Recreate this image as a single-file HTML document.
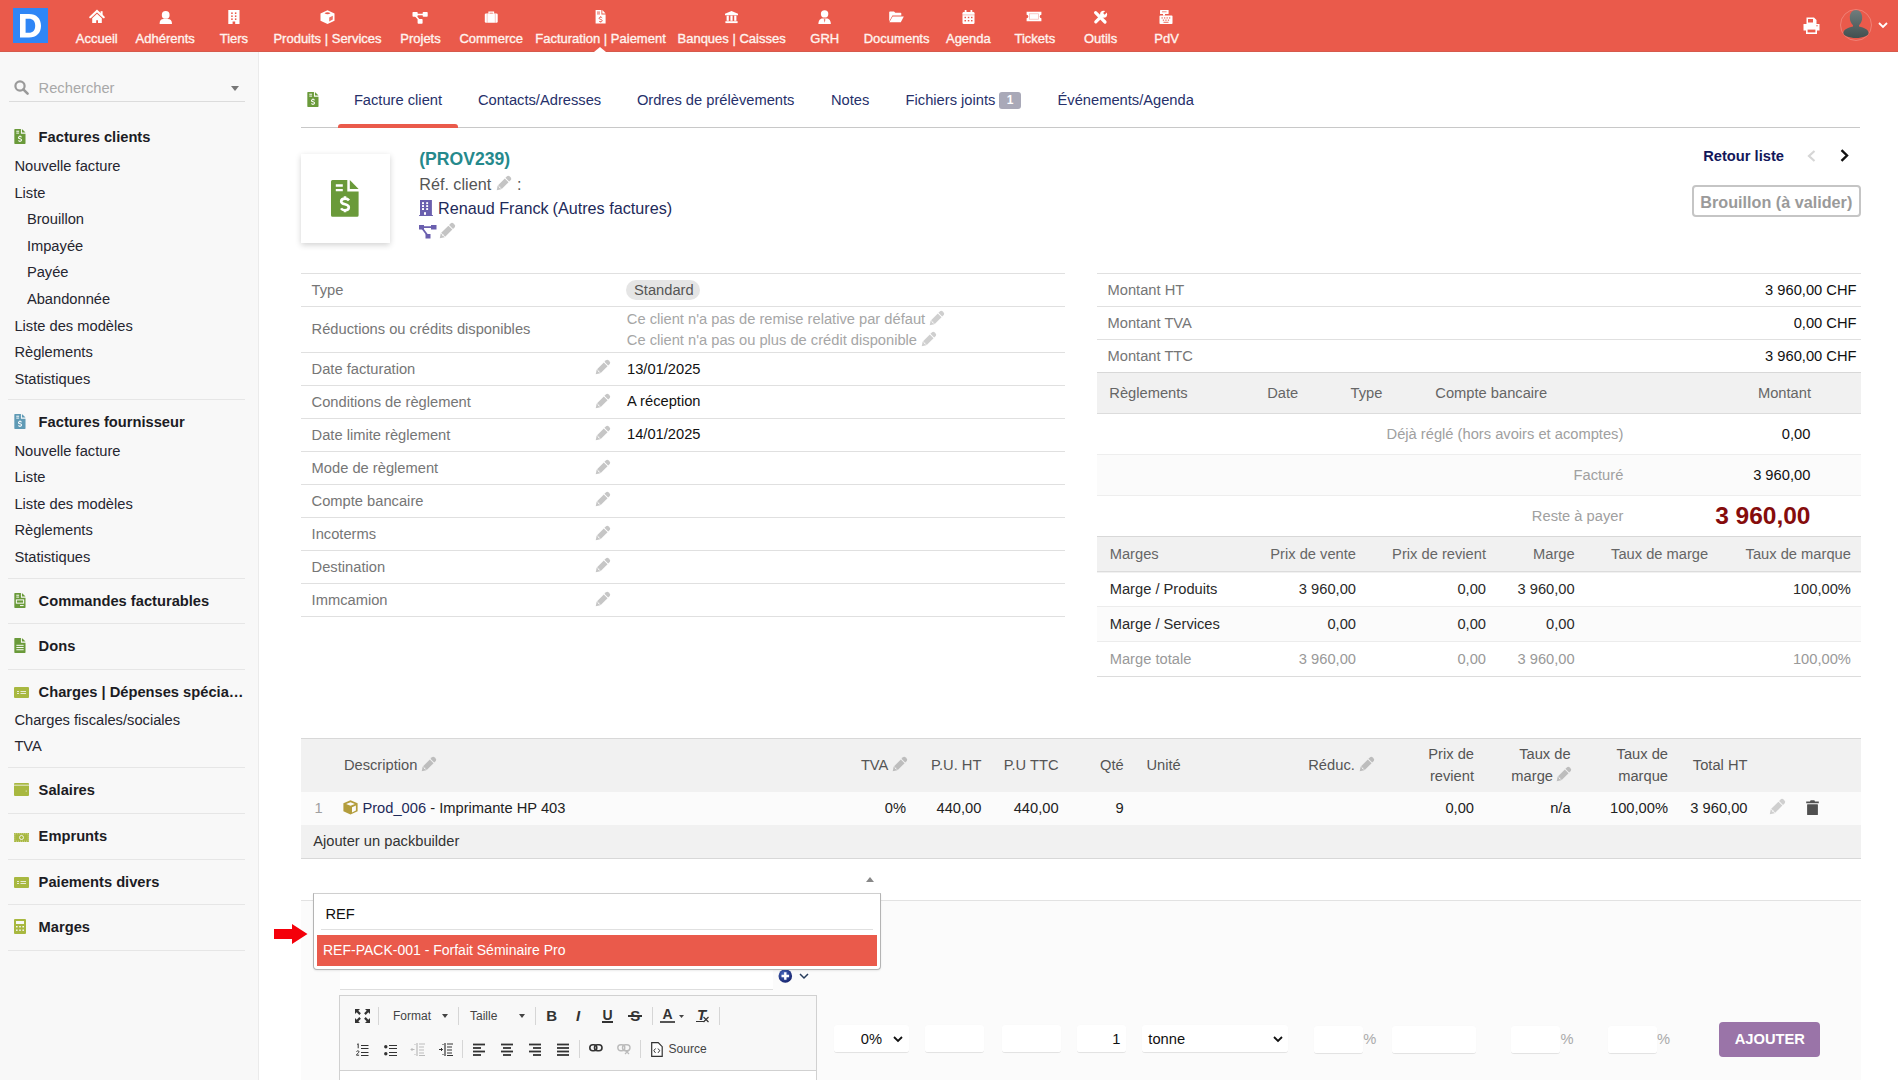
<!DOCTYPE html>
<html><head><meta charset="utf-8"><title>Dolibarr</title>
<style>
html,body{margin:0;padding:0;width:1898px;height:1080px;overflow:hidden;background:#fff;font-family:"Liberation Sans", sans-serif;}
.t{position:absolute;white-space:nowrap;font-family:"Liberation Sans", sans-serif;}
.r{position:absolute;}
svg.r{overflow:visible;}
</style></head><body>
<div class="r" style="left:0px;top:0px;width:1898px;height:52px;background:#ea5a4b;"></div><div class="r" style="left:0px;top:51px;width:1898px;height:1px;background:#d65a4c;"></div><div class="r" style="left:13px;top:8px;width:35px;height:35px;background:#2f86f6;"></div><svg class="r" style="left:20px;top:14px;" width="22" height="24" viewBox="0 0 22 24"><path d="M0 0h9c7.5 0 12 4.5 12 11.8S16.5 23.5 9 23.5H0z M5.6 4.8v13.9h3.2c4.2 0 6.4-2.5 6.4-7S13 4.8 8.8 4.8z" fill="#fff" fill-rule="evenodd"/></svg><div class="t" style="top:30.90px;font-size:13px;line-height:16px;font-weight:400;color:#fff3ee;left:-203.2px;width:600px;text-align:center;-webkit-text-stroke:0.35px #fff3ee;">Accueil</div><div class="t" style="top:30.90px;font-size:13px;line-height:16px;font-weight:400;color:#fff3ee;left:-134.8px;width:600px;text-align:center;-webkit-text-stroke:0.35px #fff3ee;">Adhérents</div><div class="t" style="top:30.90px;font-size:13px;line-height:16px;font-weight:400;color:#fff3ee;left:-66.1px;width:600px;text-align:center;-webkit-text-stroke:0.35px #fff3ee;">Tiers</div><div class="t" style="top:30.90px;font-size:13px;line-height:16px;font-weight:400;color:#fff3ee;left:27.5px;width:600px;text-align:center;-webkit-text-stroke:0.35px #fff3ee;">Produits | Services</div><div class="t" style="top:30.90px;font-size:13px;line-height:16px;font-weight:400;color:#fff3ee;left:120.5px;width:600px;text-align:center;-webkit-text-stroke:0.35px #fff3ee;">Projets</div><div class="t" style="top:30.90px;font-size:13px;line-height:16px;font-weight:400;color:#fff3ee;left:191.2px;width:600px;text-align:center;-webkit-text-stroke:0.35px #fff3ee;">Commerce</div><div class="t" style="top:30.90px;font-size:13px;line-height:16px;font-weight:400;color:#fff3ee;left:300.5px;width:600px;text-align:center;-webkit-text-stroke:0.35px #fff3ee;">Facturation | Paiement</div><div class="t" style="top:30.90px;font-size:13px;line-height:16px;font-weight:400;color:#fff3ee;left:431.6px;width:600px;text-align:center;-webkit-text-stroke:0.35px #fff3ee;">Banques | Caisses</div><div class="t" style="top:30.90px;font-size:13px;line-height:16px;font-weight:400;color:#fff3ee;left:524.8px;width:600px;text-align:center;-webkit-text-stroke:0.35px #fff3ee;">GRH</div><div class="t" style="top:30.90px;font-size:13px;line-height:16px;font-weight:400;color:#fff3ee;left:596.6px;width:600px;text-align:center;-webkit-text-stroke:0.35px #fff3ee;">Documents</div><div class="t" style="top:30.90px;font-size:13px;line-height:16px;font-weight:400;color:#fff3ee;left:668.4px;width:600px;text-align:center;-webkit-text-stroke:0.35px #fff3ee;">Agenda</div><div class="t" style="top:30.90px;font-size:13px;line-height:16px;font-weight:400;color:#fff3ee;left:734.8px;width:600px;text-align:center;-webkit-text-stroke:0.35px #fff3ee;">Tickets</div><div class="t" style="top:30.90px;font-size:13px;line-height:16px;font-weight:400;color:#fff3ee;left:800.5999999999999px;width:600px;text-align:center;-webkit-text-stroke:0.35px #fff3ee;">Outils</div><div class="t" style="top:30.90px;font-size:13px;line-height:16px;font-weight:400;color:#fff3ee;left:866.5999999999999px;width:600px;text-align:center;-webkit-text-stroke:0.35px #fff3ee;">PdV</div><svg class="r" style="left:88px;top:9px;" width="18" height="16" viewBox="0 0 18 16"><path d="M2.3 8.2L9 2l6.7 6.2" stroke="#fff" stroke-width="2.2" stroke-linecap="round" fill="none"/><rect x="12.6" y="2.2" width="2" height="4.2" fill="#fff"/><path d="M4.2 9.2L9 4.8l4.8 4.4V14.1H10V11.2H8.2V14.1H4.2z" fill="#fff"/></svg><svg class="r" style="left:159px;top:10px;" width="14" height="15" viewBox="0 0 14 15"><circle cx="6.7" cy="4.9" r="3.9" fill="#fff"/><path d="M0.6 14c0-3.2 1.2-5 4-5h4.2c2.8 0 4.2 1.8 4.2 5z" fill="#fff"/></svg><svg class="r" style="left:228px;top:10px;" width="12" height="14" viewBox="0 0 12 14"><path d="M0.3 0h11.2v14H7.2v-2.6H4.6V14H0.3z" fill="#fff"/><g fill="#ea5a4b"><rect x="3.2" y="2.4" width="1.5" height="1.6"/><rect x="6.9" y="2.4" width="1.5" height="1.6"/><rect x="3.2" y="5.4" width="1.5" height="1.6"/><rect x="6.9" y="5.4" width="1.5" height="1.6"/><rect x="3.2" y="8.4" width="1.5" height="1.6"/><rect x="6.9" y="8.4" width="1.5" height="1.6"/></g></svg><svg class="r" style="left:320px;top:10px;" width="15" height="14" viewBox="0 0 15 14"><path d="M7.5 0.3L14.5 3.4v7.4L7.5 13.9 0.5 10.8V3.4z" fill="#fff"/><path d="M4.5 3.3c1-.8 2-1.1 3-1.1s2 .3 3 1.1c-1 .6-2 .9-3 .9s-2-.3-3-.9z" fill="#ea5a4b"/><path d="M9.2 7.6l3.6-1.8v3.6l-3.6 2z" fill="#ea5a4b" opacity=".85"/></svg><svg class="r" style="left:412px;top:11px;" width="16" height="13" viewBox="0 0 16 13"><rect x="0.5" y="1" width="5.2" height="4.8" rx=".8" fill="#fff"/><rect x="10.7" y="1" width="5" height="4.8" rx=".8" fill="#fff"/><rect x="5.6" y="8" width="5" height="4.8" rx=".8" fill="#fff"/><path d="M4 3.4h7.5M3.2 4.5l4.5 5" stroke="#fff" stroke-width="1.5"/></svg><svg class="r" style="left:484px;top:11px;" width="14" height="12" viewBox="0 0 14 12"><rect x="0.8" y="2.6" width="12.9" height="9.2" rx="1.2" fill="#fff"/><path d="M5 2.8V1.2h4.5v1.6" stroke="#fff" stroke-width="1.3" fill="none"/><path d="M3.2 3v8.8M11.3 3v8.8" stroke="#ea5a4b" stroke-width=".6" opacity=".55"/></svg><svg class="r" style="left:595px;top:10px;" width="11" height="14" viewBox="0 0 11 14"><path d="M0.6 0h5.8v4.4h4.2V13.4H0.6z" fill="#fff"/><path d="M7.3 0l3.3 3.5H7.3z" fill="#fff"/><path d="M2 2.1h3M2 3.9h3" stroke="#ea5a4b" stroke-width=".9"/><path d="M5.6 6.4v.8M5.6 11.4v.8M7.2 7.9c-.4-.5-.9-.7-1.6-.7-.9 0-1.5.4-1.5 1.1 0 1.4 3.1.9 3.1 2.3 0 .7-.6 1.2-1.6 1.2-.7 0-1.3-.3-1.6-.7" stroke="#ea5a4b" stroke-width="1" fill="none"/></svg><svg class="r" style="left:725px;top:11px;" width="13" height="12" viewBox="0 0 13 12"><path d="M6.5 0L13 2.7v1.5H0V2.7z" fill="#fff"/><rect x="1.6" y="4.6" width="2.2" height="5.2" fill="#fff"/><rect x="5.4" y="4.6" width="2.2" height="5.2" fill="#fff"/><rect x="9.2" y="4.6" width="2.2" height="5.2" fill="#fff"/><rect x="0.4" y="10.2" width="12.2" height="1.9" fill="#fff"/></svg><svg class="r" style="left:818px;top:10px;" width="13" height="14" viewBox="0 0 13 14"><circle cx="6.6" cy="3.9" r="3.7" fill="#fff"/><path d="M0.4 14c0-3.3 1.4-5.6 4-5.6h4.4c2.6 0 4 2.3 4 5.6z" fill="#fff"/><path d="M6.6 8.6l-.8 1.2.8 3 .8-3z" fill="#ea5a4b" opacity=".8"/></svg><svg class="r" style="left:889px;top:11px;" width="15" height="12" viewBox="0 0 15 12"><path d="M0.2 1.2A.8.8 0 0 1 1 .4h4l1.3 1.4h5.2a.8.8 0 0 1 .8.8V4.6H3.4L0.2 10.6z" fill="#fff"/><path d="M3.6 5.4h11.2L11.8 11.2H0.4z" fill="#fff"/></svg><svg class="r" style="left:962px;top:10px;" width="13" height="14" viewBox="0 0 13 14"><rect x="0.5" y="2" width="12" height="12" rx="1.2" fill="#fff"/><rect x="2.7" y="0" width="1.8" height="3.2" rx=".6" fill="#fff"/><rect x="8.5" y="0" width="1.8" height="3.2" rx=".6" fill="#fff"/><path d="M0.5 4.9h12" stroke="#ea5a4b" stroke-width=".6" opacity=".6"/><g fill="#ea5a4b"><rect x="2.5" y="6.8" width="1.5" height="1.4"/><rect x="5.8" y="6.8" width="1.5" height="1.4"/><rect x="9" y="6.8" width="1.5" height="1.4"/><rect x="2.5" y="10" width="1.5" height="1.4"/><rect x="5.8" y="10" width="1.5" height="1.4"/><rect x="9" y="10" width="1.5" height="1.4"/></g></svg><svg class="r" style="left:1026px;top:11px;" width="16" height="11" viewBox="0 0 16 11"><path d="M0.6 0.8h14.8v3a1.7 1.7 0 0 0 0 3.4v3H0.6v-3a1.7 1.7 0 0 0 0-3.4z" fill="#fff"/><rect x="3.6" y="2.8" width="8.8" height="5.4" fill="none" stroke="#ea5a4b" stroke-width=".7" opacity=".45"/></svg><svg class="r" style="left:1093px;top:10px;" width="15" height="15" viewBox="0 0 15 15"><path d="M2.6 2.6L12 12" stroke="#fff" stroke-width="3.2" stroke-linecap="round"/><path d="M2.8 11.9L8.8 5.9" stroke="#fff" stroke-width="3.2" stroke-linecap="round"/><circle cx="10.6" cy="4.2" r="3.5" fill="#fff"/><rect x="-1.1" y="-2.4" width="2.2" height="4.8" fill="#ea5a4b" transform="translate(12.6 2.2) rotate(45)"/></svg><svg class="r" style="left:1159px;top:10px;" width="14" height="14" viewBox="0 0 14 14"><rect x="1" y="0" width="8.6" height="4" rx=".5" fill="#fff"/><rect x="4" y="4" width="2" height="1.6" fill="#fff"/><rect x="0.5" y="5.6" width="13" height="8.4" rx=".8" fill="#fff"/><g fill="#ea5a4b"><rect x="2.5" y="7.4" width="1.3" height="1.1"/><rect x="5" y="7.4" width="1.3" height="1.1"/><rect x="7.5" y="7.4" width="1.3" height="1.1"/><rect x="10" y="7.4" width="1.3" height="1.1"/><rect x="3.8" y="9.6" width="1.3" height="1.1"/><rect x="6.3" y="9.6" width="1.3" height="1.1"/><rect x="8.8" y="9.6" width="1.3" height="1.1"/><rect x="4.5" y="11.8" width="5" height=".9"/></g><path d="M3 1.8h4.6" stroke="#ea5a4b" stroke-width=".7"/></svg><svg class="r" style="left:594px;top:47px;" width="12" height="5" viewBox="0 0 12 5"><path d="M0 5L6 0l6 5z" fill="#fff"/></svg><svg class="r" style="left:1803px;top:17px;" width="17" height="17" viewBox="0 0 17 17"><path d="M3.5 0.5h7.5l2.5 2.5v4H3.5z" fill="#fff"/><rect x="5" y="2" width="5" height="3.5" fill="#ea5a4b"/><path d="M0.5 7h16v6.5h-2.5V11H3v2.5H0.5z" fill="#fff"/><circle cx="14" cy="8.8" r=".7" fill="#ea5a4b"/><rect x="3" y="11" width="11" height="6" fill="#fff"/><rect x="4.6" y="12.6" width="7.8" height="2.8" fill="#ea5a4b"/></svg><svg class="r" style="left:1840px;top:9px;" width="32" height="32" viewBox="0 0 32 32"><circle cx="16" cy="16" r="15.5" fill="none" stroke="#f08a80" stroke-width="0.8"/><defs><linearGradient id="ag" x1="0" y1="0" x2="0" y2="1"><stop offset="0" stop-color="#6f7d7d"/><stop offset="1" stop-color="#435050"/></linearGradient></defs><path d="M16 1c3.6 0 6.2 3 6.2 7.6 0 3.4-1.4 6.2-3.2 7.6v1.2c5.4 1 9.6 3.4 9.6 6.6 0 2.6-5.6 5-12.6 5S3.4 26.6 3.4 24c0-3.2 4.2-5.6 9.6-6.6v-1.2c-1.8-1.4-3.2-4.2-3.2-7.6C9.8 4 12.4 1 16 1z" fill="url(#ag)"/></svg><svg class="r" style="left:1878px;top:22px;" width="10" height="7" viewBox="0 0 10 7"><path d="M1 1l4 4 4-4" stroke="#fff" stroke-width="1.8" fill="none"/></svg><div class="r" style="left:0px;top:52px;width:258px;height:1028px;background:#f8f8f8;"></div><div class="r" style="left:258px;top:52px;width:1px;height:1028px;background:#ebebeb;"></div><svg class="r" style="left:14px;top:80px;" width="15" height="15" viewBox="0 0 15 15"><circle cx="6" cy="6" r="4.6" stroke="#9a9a9a" stroke-width="2.2" fill="none"/><path d="M9.3 9.3l4.3 4.3" stroke="#9a9a9a" stroke-width="2.6" stroke-linecap="round"/></svg><div class="t" style="top:78.81px;font-size:14.7px;line-height:18px;font-weight:400;color:#a8a8a8;left:38.6px;">Rechercher</div><svg class="r" style="left:231px;top:86px;" width="8" height="5" viewBox="0 0 8 5"><path d="M0 0h8L4 5z" fill="#777"/></svg><div class="r" style="left:9px;top:101px;width:236px;height:1px;background:#dcdcdc;"></div><svg class="r" style="left:14px;top:129px;" width="12" height="15" viewBox="0 0 28 37"><path d="M1.5 0H16.3V11.5H27.6V35.3a1.5 1.5 0 0 1-1.5 1.5H1.5A1.5 1.5 0 0 1 0 35.3V1.5A1.5 1.5 0 0 1 1.5 0z" fill="#6a9a3a"/><path d="M18.8 0L27.6 8.9H18.8z" fill="#6a9a3a"/><path d="M4.8 5.5h7M4.8 10.1h7" stroke="#fff" stroke-width="2.4"/><path d="M14 16.3v2.4M14 30v2.2M18 20.4C17 19.1 15.6 18.6 14 18.6c-2.2 0-3.8 1-3.8 2.8 0 3.6 7.6 2.2 7.6 5.8 0 1.8-1.6 3-3.8 3-1.8 0-3.2-.6-4-1.8" stroke="#fff" stroke-width="2.6" fill="none"/></svg><div class="t" style="top:127.91px;font-size:14.7px;line-height:18px;font-weight:700;color:#1c1c24;left:38.6px;">Factures clients</div><div class="t" style="top:156.91px;font-size:14.7px;line-height:18px;font-weight:400;color:#262630;left:14.4px;">Nouvelle facture</div><div class="t" style="top:183.51px;font-size:14.7px;line-height:18px;font-weight:400;color:#262630;left:14.4px;">Liste</div><div class="t" style="top:210.11px;font-size:14.7px;line-height:18px;font-weight:400;color:#262630;left:26.9px;">Brouillon</div><div class="t" style="top:236.71px;font-size:14.7px;line-height:18px;font-weight:400;color:#262630;left:26.9px;">Impayée</div><div class="t" style="top:263.31px;font-size:14.7px;line-height:18px;font-weight:400;color:#262630;left:26.9px;">Payée</div><div class="t" style="top:289.91px;font-size:14.7px;line-height:18px;font-weight:400;color:#262630;left:26.9px;">Abandonnée</div><div class="t" style="top:316.51px;font-size:14.7px;line-height:18px;font-weight:400;color:#262630;left:14.4px;">Liste des modèles</div><div class="t" style="top:343.11px;font-size:14.7px;line-height:18px;font-weight:400;color:#262630;left:14.4px;">Règlements</div><div class="t" style="top:369.71px;font-size:14.7px;line-height:18px;font-weight:400;color:#262630;left:14.4px;">Statistiques</div><div class="r" style="left:8px;top:399px;width:237px;height:1px;background:#e6e6e6;"></div><svg class="r" style="left:14px;top:414px;" width="12" height="15" viewBox="0 0 28 37"><path d="M1.5 0H16.3V11.5H27.6V35.3a1.5 1.5 0 0 1-1.5 1.5H1.5A1.5 1.5 0 0 1 0 35.3V1.5A1.5 1.5 0 0 1 1.5 0z" fill="#5f9ab5"/><path d="M18.8 0L27.6 8.9H18.8z" fill="#5f9ab5"/><path d="M4.8 5.5h7M4.8 10.1h7" stroke="#fff" stroke-width="2.4"/><path d="M14 16.3v2.4M14 30v2.2M18 20.4C17 19.1 15.6 18.6 14 18.6c-2.2 0-3.8 1-3.8 2.8 0 3.6 7.6 2.2 7.6 5.8 0 1.8-1.6 3-3.8 3-1.8 0-3.2-.6-4-1.8" stroke="#fff" stroke-width="2.6" fill="none"/></svg><div class="t" style="top:412.61px;font-size:14.7px;line-height:18px;font-weight:700;color:#1c1c24;left:38.6px;">Factures fournisseur</div><div class="t" style="top:441.51px;font-size:14.7px;line-height:18px;font-weight:400;color:#262630;left:14.4px;">Nouvelle facture</div><div class="t" style="top:468.11px;font-size:14.7px;line-height:18px;font-weight:400;color:#262630;left:14.4px;">Liste</div><div class="t" style="top:494.71px;font-size:14.7px;line-height:18px;font-weight:400;color:#262630;left:14.4px;">Liste des modèles</div><div class="t" style="top:521.31px;font-size:14.7px;line-height:18px;font-weight:400;color:#262630;left:14.4px;">Règlements</div><div class="t" style="top:547.91px;font-size:14.7px;line-height:18px;font-weight:400;color:#262630;left:14.4px;">Statistiques</div><div class="r" style="left:8px;top:578px;width:237px;height:1px;background:#e6e6e6;"></div><svg class="r" style="left:14px;top:593px;" width="12" height="15" viewBox="0 0 28 37"><path d="M1.5 0H16.3V11.5H27.6V35.3a1.5 1.5 0 0 1-1.5 1.5H1.5A1.5 1.5 0 0 1 0 35.3V1.5A1.5 1.5 0 0 1 1.5 0z" fill="#6a9a3a"/><path d="M18.8 0L27.6 8.9H18.8z" fill="#6a9a3a"/><path d="M4.8 5.5h7M4.8 10.1h7M14 31h9" stroke="#fff" stroke-width="2.4"/><rect x="5" y="17" width="18" height="8" fill="none" stroke="#fff" stroke-width="2.4"/></svg><div class="t" style="top:591.51px;font-size:14.7px;line-height:18px;font-weight:700;color:#1c1c24;left:38.6px;">Commandes facturables</div><div class="r" style="left:8px;top:623px;width:237px;height:1px;background:#e6e6e6;"></div><svg class="r" style="left:14px;top:638px;" width="12" height="15" viewBox="0 0 28 37"><path d="M1.5 0H16.3V11.5H27.6V35.3a1.5 1.5 0 0 1-1.5 1.5H1.5A1.5 1.5 0 0 1 0 35.3V1.5A1.5 1.5 0 0 1 1.5 0z" fill="#6a9a3a"/><path d="M18.8 0L27.6 8.9H18.8z" fill="#6a9a3a"/><path d="M5 18h18M5 23.5h18M5 29h18" stroke="#fff" stroke-width="2.4"/></svg><div class="t" style="top:636.61px;font-size:14.7px;line-height:18px;font-weight:700;color:#1c1c24;left:38.6px;">Dons</div><div class="r" style="left:8px;top:669px;width:237px;height:1px;background:#e6e6e6;"></div><svg class="r" style="left:14px;top:687px;" width="15" height="11" viewBox="0 0 15 11"><rect x="0" y="0" width="15" height="11" rx="1" fill="#a8b840"/><path d="M3 4.5h2M3 6.5h2M6.5 4.5h5.5M6.5 6.5h5.5" stroke="#f8f8f8" stroke-width="0.9" opacity=".9"/></svg><div class="t" style="top:682.61px;font-size:14.7px;line-height:18px;font-weight:700;color:#1c1c24;left:38.6px;">Charges | Dépenses spécia…</div><div class="t" style="top:710.61px;font-size:14.7px;line-height:18px;font-weight:400;color:#262630;left:14.4px;">Charges fiscales/sociales</div><div class="t" style="top:737.41px;font-size:14.7px;line-height:18px;font-weight:400;color:#262630;left:14.4px;">TVA</div><div class="r" style="left:8px;top:767px;width:237px;height:1px;background:#e6e6e6;"></div><svg class="r" style="left:14px;top:783px;" width="15" height="13" viewBox="0 0 15 13"><rect x="0" y="0" width="15" height="13" rx="1" fill="#a8b840"/><path d="M0 2.2h15" stroke="#f8f8f8" stroke-width=".8"/><circle cx="12.2" cy="8" r=".6" fill="#f8f8f8"/></svg><div class="t" style="top:780.51px;font-size:14.7px;line-height:18px;font-weight:700;color:#1c1c24;left:38.6px;">Salaires</div><div class="r" style="left:8px;top:813px;width:237px;height:1px;background:#e6e6e6;"></div><svg class="r" style="left:14px;top:833px;" width="15" height="9" viewBox="0 0 15 9"><rect x="0" y="0" width="15" height="9" fill="#a8b840"/><circle cx="7.5" cy="4.5" r="2" fill="none" stroke="#f8f8f8" stroke-width=".9"/><path d="M.8 .8h13.4v7.4H.8z" fill="none" stroke="#f8f8f8" stroke-width=".5" stroke-dasharray="1 1"/></svg><div class="t" style="top:827.11px;font-size:14.7px;line-height:18px;font-weight:700;color:#1c1c24;left:38.6px;">Emprunts</div><div class="r" style="left:8px;top:859px;width:237px;height:1px;background:#e6e6e6;"></div><svg class="r" style="left:14px;top:877px;" width="15" height="11" viewBox="0 0 15 11"><rect x="0" y="0" width="15" height="11" rx="1" fill="#a8b840"/><path d="M3 4.5h2M3 6.5h2M6.5 4.5h5.5M6.5 6.5h5.5" stroke="#f8f8f8" stroke-width="0.9" opacity=".9"/></svg><div class="t" style="top:872.91px;font-size:14.7px;line-height:18px;font-weight:700;color:#1c1c24;left:38.6px;">Paiements divers</div><div class="r" style="left:8px;top:904px;width:237px;height:1px;background:#e6e6e6;"></div><svg class="r" style="left:14px;top:919px;" width="12" height="15" viewBox="0 0 12 15"><rect x="0" y="0" width="12" height="15" rx="1" fill="#a8b840"/><rect x="2" y="2" width="8" height="3" fill="#f8f8f8"/><g fill="#f8f8f8"><rect x="2" y="7" width="1.6" height="1.4"/><rect x="5.2" y="7" width="1.6" height="1.4"/><rect x="8.4" y="7" width="1.6" height="1.4"/><rect x="2" y="10.5" width="1.6" height="1.4"/><rect x="5.2" y="10.5" width="1.6" height="1.4"/><rect x="8.4" y="10.5" width="1.6" height="1.4"/></g></svg><div class="t" style="top:917.51px;font-size:14.7px;line-height:18px;font-weight:700;color:#1c1c24;left:38.6px;">Marges</div><div class="r" style="left:8px;top:950px;width:237px;height:1px;background:#e6e6e6;"></div><svg class="r" style="left:307px;top:92px;" width="12" height="15" viewBox="0 0 28 37"><path d="M1.5 0H16.3V11.5H27.6V35.3a1.5 1.5 0 0 1-1.5 1.5H1.5A1.5 1.5 0 0 1 0 35.3V1.5A1.5 1.5 0 0 1 1.5 0z" fill="#6a9a3a"/><path d="M18.8 0L27.6 8.9H18.8z" fill="#6a9a3a"/><path d="M4.8 5.5h7M4.8 10.1h7" stroke="#fff" stroke-width="2.4"/><path d="M14 16.3v2.4M14 30v2.2M18 20.4C17 19.1 15.6 18.6 14 18.6c-2.2 0-3.8 1-3.8 2.8 0 3.6 7.6 2.2 7.6 5.8 0 1.8-1.6 3-3.8 3-1.8 0-3.2-.6-4-1.8" stroke="#fff" stroke-width="2.6" fill="none"/></svg><div class="t" style="top:91.11px;font-size:14.7px;line-height:18px;font-weight:400;color:#26306a;left:353.9px;">Facture client</div><div class="t" style="top:91.11px;font-size:14.7px;line-height:18px;font-weight:400;color:#26306a;left:477.9px;">Contacts/Adresses</div><div class="t" style="top:91.11px;font-size:14.7px;line-height:18px;font-weight:400;color:#26306a;left:636.9px;">Ordres de prélèvements</div><div class="t" style="top:91.11px;font-size:14.7px;line-height:18px;font-weight:400;color:#26306a;left:831px;">Notes</div><div class="t" style="top:91.11px;font-size:14.7px;line-height:18px;font-weight:400;color:#26306a;left:905.6px;">Fichiers joints</div><div class="r" style="left:999px;top:92px;width:22px;height:17px;background:#a9a9b8;border-radius:3px;"></div><div class="t" style="top:93.34px;font-size:12px;line-height:15px;font-weight:700;color:#fff;left:710px;width:600px;text-align:center;">1</div><div class="t" style="top:91.11px;font-size:14.7px;line-height:18px;font-weight:400;color:#26306a;left:1057.5px;">Événements/Agenda</div><div class="r" style="left:301px;top:127px;width:1559px;height:1px;background:#c8c8c8;"></div><div class="r" style="left:338px;top:124px;width:120px;height:4px;background:#ea5a4b;border-radius:3px 3px 0 0;"></div><div class="r" style="left:301px;top:154px;width:89px;height:89px;background:#fff;box-shadow:0 2px 6px rgba(0,0,0,.18);"></div><svg class="r" style="left:331px;top:180px;" width="28" height="37" viewBox="0 0 28 37"><path d="M1.5 0H16.3V11.5H27.6V35.3a1.5 1.5 0 0 1-1.5 1.5H1.5A1.5 1.5 0 0 1 0 35.3V1.5A1.5 1.5 0 0 1 1.5 0z" fill="#6a9a3a"/><path d="M18.8 0L27.6 8.9H18.8z" fill="#6a9a3a"/><path d="M4.8 5.5h7M4.8 10.1h7" stroke="#fff" stroke-width="2.4"/><path d="M14 16.3v2.4M14 30v2.2M18 20.4C17 19.1 15.6 18.6 14 18.6c-2.2 0-3.8 1-3.8 2.8 0 3.6 7.6 2.2 7.6 5.8 0 1.8-1.6 3-3.8 3-1.8 0-3.2-.6-4-1.8" stroke="#fff" stroke-width="2.6" fill="none"/></svg><div class="t" style="top:147.50px;font-size:17.6px;line-height:22px;font-weight:700;color:#25898c;left:419.2px;">(PROV239)</div><div class="t" style="top:173.79px;font-size:16.2px;line-height:20px;font-weight:400;color:#555;left:419.2px;">Réf. client</div><svg class="r" style="left:496px;top:176px;" width="15" height="15" viewBox="0 0 16 16"><g transform="translate(8 8) rotate(-45) translate(-10.2 0)" fill="#c4c4c4"><path d="M0 0L4.2 -2.8V2.8z"/><rect x="4.8" y="-2.8" width="10.2" height="5.6"/><path d="M15.9 -2.8h2.5a1.8 2.8 0 0 1 0 5.6h-2.5z"/></g><path d="M3.2 12.8l1.2-1.2" stroke="#fff" stroke-width="1" opacity=".7"/></svg><div class="t" style="top:173.79px;font-size:16.2px;line-height:20px;font-weight:400;color:#555;left:517px;">:</div><svg class="r" style="left:419px;top:200px;" width="14" height="16" viewBox="0 0 14 16"><path d="M1 0h11.9v15H13.9v1H0.1v-1H1z" fill="#6a5fae"/><g fill="#fff"><rect x="3" y="2.2" width="2" height="1.9"/><rect x="7.2" y="2.2" width="1.9" height="1.9"/><rect x="3" y="5.1" width="2" height="1.9"/><rect x="7.2" y="5.1" width="1.9" height="1.9"/><rect x="3" y="8.1" width="2" height="1.9"/><rect x="7.2" y="8.1" width="1.9" height="1.9"/><rect x="5" y="12.2" width="2" height="2.6"/></g></svg><div class="t" style="top:197.59px;font-size:16.2px;line-height:20px;font-weight:400;color:#1e2a5a;left:438px;">Renaud Franck</div><div class="t" style="top:197.59px;font-size:16.2px;line-height:20px;font-weight:400;color:#1e2a5a;left:552.5px;">(Autres factures)</div><svg class="r" style="left:419px;top:225px;" width="18" height="14" viewBox="0 0 18 14"><rect x="0" y="0" width="5" height="4.5" fill="#6a5fae"/><rect x="12" y="0" width="5.5" height="4.5" fill="#6a5fae"/><rect x="6.5" y="9" width="5" height="4.5" fill="#6a5fae"/><path d="M3 3l6 8M4 2.2h9" stroke="#6a5fae" stroke-width="1.8"/></svg><svg class="r" style="left:439px;top:223px;" width="16" height="16" viewBox="0 0 16 16"><g transform="translate(8 8) rotate(-45) translate(-10.2 0)" fill="#c4c4c4"><path d="M0 0L4.2 -2.8V2.8z"/><rect x="4.8" y="-2.8" width="10.2" height="5.6"/><path d="M15.9 -2.8h2.5a1.8 2.8 0 0 1 0 5.6h-2.5z"/></g><path d="M3.2 12.8l1.2-1.2" stroke="#fff" stroke-width="1" opacity=".7"/></svg><div class="t" style="top:146.51px;font-size:14.7px;line-height:18px;font-weight:700;color:#12175a;right:114px;text-align:right;">Retour liste</div><svg class="r" style="left:1807px;top:150px;" width="9" height="12" viewBox="0 0 9 12"><path d="M7.5 1L2 6l5.5 5" stroke="#d6d6d6" stroke-width="2.2" fill="none"/></svg><svg class="r" style="left:1840px;top:149px;" width="9" height="13" viewBox="0 0 9 13"><path d="M1.5 1.2L7 6.5l-5.5 5.3" stroke="#111" stroke-width="2.4" fill="none"/></svg><div class="r" style="left:1692px;top:185px;width:165px;height:28px;border:2px solid #c5c5c5;border-radius:4px;background:#fff;"></div><div class="t" style="top:191.99px;font-size:16.2px;line-height:20px;font-weight:700;color:#9a9a9a;left:1476.3px;width:600px;text-align:center;">Brouillon (à valider)</div><div class="r" style="left:301px;top:273px;width:764px;height:1px;background:#e0e0e0;"></div><div class="r" style="left:301px;top:306px;width:764px;height:1px;background:#e0e0e0;"></div><div class="r" style="left:301px;top:352px;width:764px;height:1px;background:#e0e0e0;"></div><div class="r" style="left:301px;top:385px;width:764px;height:1px;background:#e0e0e0;"></div><div class="r" style="left:301px;top:418px;width:764px;height:1px;background:#e0e0e0;"></div><div class="r" style="left:301px;top:451px;width:764px;height:1px;background:#e0e0e0;"></div><div class="r" style="left:301px;top:484px;width:764px;height:1px;background:#e0e0e0;"></div><div class="r" style="left:301px;top:517px;width:764px;height:1px;background:#e0e0e0;"></div><div class="r" style="left:301px;top:550px;width:764px;height:1px;background:#e0e0e0;"></div><div class="r" style="left:301px;top:583px;width:764px;height:1px;background:#e0e0e0;"></div><div class="r" style="left:301px;top:616px;width:764px;height:1px;background:#e0e0e0;"></div><div class="t" style="top:280.91px;font-size:14.7px;line-height:18px;font-weight:400;color:#767676;left:311.6px;">Type</div><div class="t" style="top:319.71px;font-size:14.7px;line-height:18px;font-weight:400;color:#767676;left:311.6px;">Réductions ou crédits disponibles</div><div class="t" style="top:359.91px;font-size:14.7px;line-height:18px;font-weight:400;color:#767676;left:311.6px;">Date facturation</div><svg class="r" style="left:595px;top:360px;" width="15" height="15" viewBox="0 0 16 16"><g transform="translate(8 8) rotate(-45) translate(-10.2 0)" fill="#c6c6c6"><path d="M0 0L4.2 -2.8V2.8z"/><rect x="4.8" y="-2.8" width="10.2" height="5.6"/><path d="M15.9 -2.8h2.5a1.8 2.8 0 0 1 0 5.6h-2.5z"/></g><path d="M3.2 12.8l1.2-1.2" stroke="#fff" stroke-width="1" opacity=".7"/></svg><div class="t" style="top:392.91px;font-size:14.7px;line-height:18px;font-weight:400;color:#767676;left:311.6px;">Conditions de règlement</div><svg class="r" style="left:595px;top:394px;" width="15" height="15" viewBox="0 0 16 16"><g transform="translate(8 8) rotate(-45) translate(-10.2 0)" fill="#c6c6c6"><path d="M0 0L4.2 -2.8V2.8z"/><rect x="4.8" y="-2.8" width="10.2" height="5.6"/><path d="M15.9 -2.8h2.5a1.8 2.8 0 0 1 0 5.6h-2.5z"/></g><path d="M3.2 12.8l1.2-1.2" stroke="#fff" stroke-width="1" opacity=".7"/></svg><div class="t" style="top:425.91px;font-size:14.7px;line-height:18px;font-weight:400;color:#767676;left:311.6px;">Date limite règlement</div><svg class="r" style="left:595px;top:426px;" width="15" height="15" viewBox="0 0 16 16"><g transform="translate(8 8) rotate(-45) translate(-10.2 0)" fill="#c6c6c6"><path d="M0 0L4.2 -2.8V2.8z"/><rect x="4.8" y="-2.8" width="10.2" height="5.6"/><path d="M15.9 -2.8h2.5a1.8 2.8 0 0 1 0 5.6h-2.5z"/></g><path d="M3.2 12.8l1.2-1.2" stroke="#fff" stroke-width="1" opacity=".7"/></svg><div class="t" style="top:458.91px;font-size:14.7px;line-height:18px;font-weight:400;color:#767676;left:311.6px;">Mode de règlement</div><svg class="r" style="left:595px;top:460px;" width="15" height="15" viewBox="0 0 16 16"><g transform="translate(8 8) rotate(-45) translate(-10.2 0)" fill="#c6c6c6"><path d="M0 0L4.2 -2.8V2.8z"/><rect x="4.8" y="-2.8" width="10.2" height="5.6"/><path d="M15.9 -2.8h2.5a1.8 2.8 0 0 1 0 5.6h-2.5z"/></g><path d="M3.2 12.8l1.2-1.2" stroke="#fff" stroke-width="1" opacity=".7"/></svg><div class="t" style="top:491.91px;font-size:14.7px;line-height:18px;font-weight:400;color:#767676;left:311.6px;">Compte bancaire</div><svg class="r" style="left:595px;top:492px;" width="15" height="15" viewBox="0 0 16 16"><g transform="translate(8 8) rotate(-45) translate(-10.2 0)" fill="#c6c6c6"><path d="M0 0L4.2 -2.8V2.8z"/><rect x="4.8" y="-2.8" width="10.2" height="5.6"/><path d="M15.9 -2.8h2.5a1.8 2.8 0 0 1 0 5.6h-2.5z"/></g><path d="M3.2 12.8l1.2-1.2" stroke="#fff" stroke-width="1" opacity=".7"/></svg><div class="t" style="top:524.91px;font-size:14.7px;line-height:18px;font-weight:400;color:#767676;left:311.6px;">Incoterms</div><svg class="r" style="left:595px;top:526px;" width="15" height="15" viewBox="0 0 16 16"><g transform="translate(8 8) rotate(-45) translate(-10.2 0)" fill="#c6c6c6"><path d="M0 0L4.2 -2.8V2.8z"/><rect x="4.8" y="-2.8" width="10.2" height="5.6"/><path d="M15.9 -2.8h2.5a1.8 2.8 0 0 1 0 5.6h-2.5z"/></g><path d="M3.2 12.8l1.2-1.2" stroke="#fff" stroke-width="1" opacity=".7"/></svg><div class="t" style="top:557.91px;font-size:14.7px;line-height:18px;font-weight:400;color:#767676;left:311.6px;">Destination</div><svg class="r" style="left:595px;top:558px;" width="15" height="15" viewBox="0 0 16 16"><g transform="translate(8 8) rotate(-45) translate(-10.2 0)" fill="#c6c6c6"><path d="M0 0L4.2 -2.8V2.8z"/><rect x="4.8" y="-2.8" width="10.2" height="5.6"/><path d="M15.9 -2.8h2.5a1.8 2.8 0 0 1 0 5.6h-2.5z"/></g><path d="M3.2 12.8l1.2-1.2" stroke="#fff" stroke-width="1" opacity=".7"/></svg><div class="t" style="top:590.91px;font-size:14.7px;line-height:18px;font-weight:400;color:#767676;left:311.6px;">Immcamion</div><svg class="r" style="left:595px;top:592px;" width="15" height="15" viewBox="0 0 16 16"><g transform="translate(8 8) rotate(-45) translate(-10.2 0)" fill="#c6c6c6"><path d="M0 0L4.2 -2.8V2.8z"/><rect x="4.8" y="-2.8" width="10.2" height="5.6"/><path d="M15.9 -2.8h2.5a1.8 2.8 0 0 1 0 5.6h-2.5z"/></g><path d="M3.2 12.8l1.2-1.2" stroke="#fff" stroke-width="1" opacity=".7"/></svg><div class="r" style="left:626px;top:280px;width:74px;height:20px;background:#e5e5e5;border-radius:10px;"></div><div class="t" style="top:280.91px;font-size:14.7px;line-height:18px;font-weight:400;color:#555;left:634px;">Standard</div><div class="t" style="top:309.91px;font-size:14.7px;line-height:18px;font-weight:400;color:#a6a6a6;left:626.8px;">Ce client n'a pas de remise relative par défaut</div><svg class="r" style="left:929px;top:311px;" width="15" height="15" viewBox="0 0 16 16"><g transform="translate(8 8) rotate(-45) translate(-10.2 0)" fill="#cfcfcf"><path d="M0 0L4.2 -2.8V2.8z"/><rect x="4.8" y="-2.8" width="10.2" height="5.6"/><path d="M15.9 -2.8h2.5a1.8 2.8 0 0 1 0 5.6h-2.5z"/></g><path d="M3.2 12.8l1.2-1.2" stroke="#fff" stroke-width="1" opacity=".7"/></svg><div class="t" style="top:330.91px;font-size:14.7px;line-height:18px;font-weight:400;color:#a6a6a6;left:626.8px;">Ce client n'a pas ou plus de crédit disponible</div><svg class="r" style="left:921px;top:332px;" width="15" height="15" viewBox="0 0 16 16"><g transform="translate(8 8) rotate(-45) translate(-10.2 0)" fill="#cfcfcf"><path d="M0 0L4.2 -2.8V2.8z"/><rect x="4.8" y="-2.8" width="10.2" height="5.6"/><path d="M15.9 -2.8h2.5a1.8 2.8 0 0 1 0 5.6h-2.5z"/></g><path d="M3.2 12.8l1.2-1.2" stroke="#fff" stroke-width="1" opacity=".7"/></svg><div class="t" style="top:359.51px;font-size:14.7px;line-height:18px;font-weight:400;color:#111;left:627px;">13/01/2025</div><div class="t" style="top:392.41px;font-size:14.7px;line-height:18px;font-weight:400;color:#111;left:627px;">A réception</div><div class="t" style="top:425.31px;font-size:14.7px;line-height:18px;font-weight:400;color:#111;left:627px;">14/01/2025</div><div class="r" style="left:1097px;top:273px;width:764px;height:1px;background:#e0e0e0;"></div><div class="r" style="left:1097px;top:306px;width:764px;height:1px;background:#e0e0e0;"></div><div class="r" style="left:1097px;top:339px;width:764px;height:1px;background:#e0e0e0;"></div><div class="t" style="top:280.91px;font-size:14.7px;line-height:18px;font-weight:400;color:#767676;left:1107.5px;">Montant HT</div><div class="t" style="top:280.91px;font-size:14.7px;line-height:18px;font-weight:400;color:#111;right:41.5px;text-align:right;">3 960,00 CHF</div><div class="t" style="top:313.91px;font-size:14.7px;line-height:18px;font-weight:400;color:#767676;left:1107.5px;">Montant TVA</div><div class="t" style="top:313.91px;font-size:14.7px;line-height:18px;font-weight:400;color:#111;right:41.5px;text-align:right;">0,00 CHF</div><div class="t" style="top:346.71px;font-size:14.7px;line-height:18px;font-weight:400;color:#767676;left:1107.5px;">Montant TTC</div><div class="t" style="top:346.71px;font-size:14.7px;line-height:18px;font-weight:400;color:#111;right:41.5px;text-align:right;">3 960,00 CHF</div><div class="r" style="left:1097px;top:372px;width:764px;height:41px;background:#f1f1f1;border-top:1px solid #d8d8d8;"></div><div class="r" style="left:1097px;top:413px;width:764px;height:1px;background:#dcdcdc;"></div><div class="t" style="top:383.81px;font-size:14.7px;line-height:18px;font-weight:400;color:#666;left:1109.3px;">Règlements</div><div class="t" style="top:383.81px;font-size:14.7px;line-height:18px;font-weight:400;color:#666;left:1267.2px;">Date</div><div class="t" style="top:383.81px;font-size:14.7px;line-height:18px;font-weight:400;color:#666;left:1350.5px;">Type</div><div class="t" style="top:383.81px;font-size:14.7px;line-height:18px;font-weight:400;color:#666;left:1435.3px;">Compte bancaire</div><div class="t" style="top:383.81px;font-size:14.7px;line-height:18px;font-weight:400;color:#666;right:87px;text-align:right;">Montant</div><div class="t" style="top:425.01px;font-size:14.7px;line-height:18px;font-weight:400;color:#a0a0a0;right:274.70000000000005px;text-align:right;">Déjà réglé (hors avoirs et acomptes)</div><div class="t" style="top:425.01px;font-size:14.7px;line-height:18px;font-weight:400;color:#111;right:87.70000000000005px;text-align:right;">0,00</div><div class="r" style="left:1097px;top:454px;width:764px;height:1px;background:#eeeeee;"></div><div class="r" style="left:1097px;top:455px;width:764px;height:40px;background:#fbfbfb;"></div><div class="r" style="left:1097px;top:495px;width:764px;height:1px;background:#eeeeee;"></div><div class="t" style="top:465.91px;font-size:14.7px;line-height:18px;font-weight:400;color:#a0a0a0;right:274.70000000000005px;text-align:right;">Facturé</div><div class="t" style="top:465.91px;font-size:14.7px;line-height:18px;font-weight:400;color:#111;right:87.70000000000005px;text-align:right;">3 960,00</div><div class="t" style="top:506.91px;font-size:14.7px;line-height:18px;font-weight:400;color:#a0a0a0;right:274.70000000000005px;text-align:right;">Reste à payer</div><div class="t" style="top:499.51px;font-size:24.5px;line-height:31px;font-weight:700;color:#850c0c;right:87.5px;text-align:right;">3 960,00</div><div class="r" style="left:1097px;top:536px;width:764px;height:36px;background:#f1f1f1;border-top:1px solid #d8d8d8;"></div><div class="r" style="left:1097px;top:571px;width:764px;height:1px;background:#dcdcdc;"></div><div class="t" style="top:544.91px;font-size:14.7px;line-height:18px;font-weight:400;color:#666;left:1109.7px;">Marges</div><div class="t" style="top:544.91px;font-size:14.7px;line-height:18px;font-weight:400;color:#666;right:542px;text-align:right;">Prix de vente</div><div class="t" style="top:544.91px;font-size:14.7px;line-height:18px;font-weight:400;color:#666;right:412px;text-align:right;">Prix de revient</div><div class="t" style="top:544.91px;font-size:14.7px;line-height:18px;font-weight:400;color:#666;right:323.29999999999995px;text-align:right;">Marge</div><div class="t" style="top:544.91px;font-size:14.7px;line-height:18px;font-weight:400;color:#666;right:189.79999999999995px;text-align:right;">Taux de marge</div><div class="t" style="top:544.91px;font-size:14.7px;line-height:18px;font-weight:400;color:#666;right:47.09999999999991px;text-align:right;">Taux de marque</div><div class="r" style="left:1097px;top:606px;width:764px;height:1px;background:#ececec;"></div><div class="r" style="left:1097px;top:607px;width:764px;height:34px;background:#fbfbfb;"></div><div class="r" style="left:1097px;top:641px;width:764px;height:1px;background:#ececec;"></div><div class="r" style="left:1097px;top:676px;width:764px;height:1px;background:#dcdcdc;"></div><div class="t" style="top:579.61px;font-size:14.7px;line-height:18px;font-weight:400;color:#2a2a2a;left:1109.7px;">Marge / Produits</div><div class="t" style="top:579.61px;font-size:14.7px;line-height:18px;font-weight:400;color:#2a2a2a;right:542px;text-align:right;">3 960,00</div><div class="t" style="top:579.61px;font-size:14.7px;line-height:18px;font-weight:400;color:#2a2a2a;right:412px;text-align:right;">0,00</div><div class="t" style="top:579.61px;font-size:14.7px;line-height:18px;font-weight:400;color:#2a2a2a;right:323.29999999999995px;text-align:right;">3 960,00</div><div class="t" style="top:579.61px;font-size:14.7px;line-height:18px;font-weight:400;color:#2a2a2a;right:47.09999999999991px;text-align:right;">100,00%</div><div class="t" style="top:614.81px;font-size:14.7px;line-height:18px;font-weight:400;color:#2a2a2a;left:1109.7px;">Marge / Services</div><div class="t" style="top:614.81px;font-size:14.7px;line-height:18px;font-weight:400;color:#2a2a2a;right:542px;text-align:right;">0,00</div><div class="t" style="top:614.81px;font-size:14.7px;line-height:18px;font-weight:400;color:#2a2a2a;right:412px;text-align:right;">0,00</div><div class="t" style="top:614.81px;font-size:14.7px;line-height:18px;font-weight:400;color:#2a2a2a;right:323.29999999999995px;text-align:right;">0,00</div><div class="t" style="top:649.91px;font-size:14.7px;line-height:18px;font-weight:400;color:#999;left:1109.7px;">Marge totale</div><div class="t" style="top:649.91px;font-size:14.7px;line-height:18px;font-weight:400;color:#999;right:542px;text-align:right;">3 960,00</div><div class="t" style="top:649.91px;font-size:14.7px;line-height:18px;font-weight:400;color:#999;right:412px;text-align:right;">0,00</div><div class="t" style="top:649.91px;font-size:14.7px;line-height:18px;font-weight:400;color:#999;right:323.29999999999995px;text-align:right;">3 960,00</div><div class="t" style="top:649.91px;font-size:14.7px;line-height:18px;font-weight:400;color:#999;right:47.09999999999991px;text-align:right;">100,00%</div><div class="r" style="left:301px;top:738px;width:1560px;height:54px;background:#f1f1f1;border-top:1px solid #d8d8d8;"></div><div class="r" style="left:301px;top:792px;width:1560px;height:33px;background:#fbfbfb;"></div><div class="r" style="left:301px;top:825px;width:1560px;height:33px;background:#f1f1f1;"></div><div class="r" style="left:301px;top:858px;width:1560px;height:1px;background:#d8d8d8;"></div><div class="t" style="top:755.51px;font-size:14.7px;line-height:18px;font-weight:400;color:#555;left:343.9px;">Description</div><svg class="r" style="left:421px;top:757px;" width="15" height="15" viewBox="0 0 16 16"><g transform="translate(8 8) rotate(-45) translate(-10.2 0)" fill="#bdbdbd"><path d="M0 0L4.2 -2.8V2.8z"/><rect x="4.8" y="-2.8" width="10.2" height="5.6"/><path d="M15.9 -2.8h2.5a1.8 2.8 0 0 1 0 5.6h-2.5z"/></g><path d="M3.2 12.8l1.2-1.2" stroke="#fff" stroke-width="1" opacity=".7"/></svg><div class="t" style="top:755.51px;font-size:14.7px;line-height:18px;font-weight:400;color:#555;left:860.9px;">TVA</div><svg class="r" style="left:892px;top:757px;" width="15" height="15" viewBox="0 0 16 16"><g transform="translate(8 8) rotate(-45) translate(-10.2 0)" fill="#bdbdbd"><path d="M0 0L4.2 -2.8V2.8z"/><rect x="4.8" y="-2.8" width="10.2" height="5.6"/><path d="M15.9 -2.8h2.5a1.8 2.8 0 0 1 0 5.6h-2.5z"/></g><path d="M3.2 12.8l1.2-1.2" stroke="#fff" stroke-width="1" opacity=".7"/></svg><div class="t" style="top:755.51px;font-size:14.7px;line-height:18px;font-weight:400;color:#555;right:916.6px;text-align:right;">P.U. HT</div><div class="t" style="top:755.51px;font-size:14.7px;line-height:18px;font-weight:400;color:#555;right:839.4000000000001px;text-align:right;">P.U TTC</div><div class="t" style="top:755.51px;font-size:14.7px;line-height:18px;font-weight:400;color:#555;right:774.3px;text-align:right;">Qté</div><div class="t" style="top:755.51px;font-size:14.7px;line-height:18px;font-weight:400;color:#555;left:1146.5px;">Unité</div><div class="t" style="top:755.51px;font-size:14.7px;line-height:18px;font-weight:400;color:#555;right:543.2px;text-align:right;">Réduc.</div><svg class="r" style="left:1359px;top:757px;" width="15" height="15" viewBox="0 0 16 16"><g transform="translate(8 8) rotate(-45) translate(-10.2 0)" fill="#bdbdbd"><path d="M0 0L4.2 -2.8V2.8z"/><rect x="4.8" y="-2.8" width="10.2" height="5.6"/><path d="M15.9 -2.8h2.5a1.8 2.8 0 0 1 0 5.6h-2.5z"/></g><path d="M3.2 12.8l1.2-1.2" stroke="#fff" stroke-width="1" opacity=".7"/></svg><div class="t" style="top:745.31px;font-size:14.7px;line-height:18px;font-weight:400;color:#555;right:424px;text-align:right;">Prix de</div><div class="t" style="top:766.71px;font-size:14.7px;line-height:18px;font-weight:400;color:#555;right:424px;text-align:right;">revient</div><div class="t" style="top:745.31px;font-size:14.7px;line-height:18px;font-weight:400;color:#555;right:327.4000000000001px;text-align:right;">Taux de</div><div class="t" style="top:766.71px;font-size:14.7px;line-height:18px;font-weight:400;color:#555;right:345px;text-align:right;">marge</div><svg class="r" style="left:1556px;top:767px;" width="15" height="15" viewBox="0 0 16 16"><g transform="translate(8 8) rotate(-45) translate(-10.2 0)" fill="#bdbdbd"><path d="M0 0L4.2 -2.8V2.8z"/><rect x="4.8" y="-2.8" width="10.2" height="5.6"/><path d="M15.9 -2.8h2.5a1.8 2.8 0 0 1 0 5.6h-2.5z"/></g><path d="M3.2 12.8l1.2-1.2" stroke="#fff" stroke-width="1" opacity=".7"/></svg><div class="t" style="top:745.31px;font-size:14.7px;line-height:18px;font-weight:400;color:#555;right:230px;text-align:right;">Taux de</div><div class="t" style="top:766.71px;font-size:14.7px;line-height:18px;font-weight:400;color:#555;right:230px;text-align:right;">marque</div><div class="t" style="top:755.51px;font-size:14.7px;line-height:18px;font-weight:400;color:#555;right:150.5px;text-align:right;">Total HT</div><div class="t" style="top:798.91px;font-size:14.7px;line-height:18px;font-weight:400;color:#a0a0a0;left:314.4px;">1</div><svg class="r" style="left:343px;top:800px;" width="15" height="15" viewBox="0 0 15 15"><path d="M7.5 0.3L14.6 3.3V11.3L7.5 14.6 0.4 11.3V3.3z" fill="#b39d3c"/><path d="M7.5 2.2L11.9 4 7.5 5.8 3.1 4z" fill="#fbfbfb"/><path d="M9 7.2L12.9 5.5V10.6L9 12.4z" fill="#fbfbfb"/></svg><div class="t" style="top:798.91px;font-size:14.7px;line-height:18px;font-weight:400;color:#222;left:362.4px;"><span style="color:#1e2a5a">Prod_006</span> - Imprimante HP 403</div><div class="t" style="top:798.91px;font-size:14.7px;line-height:18px;font-weight:400;color:#222;right:992px;text-align:right;">0%</div><div class="t" style="top:798.91px;font-size:14.7px;line-height:18px;font-weight:400;color:#222;right:916.6px;text-align:right;">440,00</div><div class="t" style="top:798.91px;font-size:14.7px;line-height:18px;font-weight:400;color:#222;right:839.4000000000001px;text-align:right;">440,00</div><div class="t" style="top:798.91px;font-size:14.7px;line-height:18px;font-weight:400;color:#222;right:774.3px;text-align:right;">9</div><div class="t" style="top:798.91px;font-size:14.7px;line-height:18px;font-weight:400;color:#222;right:424px;text-align:right;">0,00</div><div class="t" style="top:798.91px;font-size:14.7px;line-height:18px;font-weight:400;color:#222;right:327.4000000000001px;text-align:right;">n/a</div><div class="t" style="top:798.91px;font-size:14.7px;line-height:18px;font-weight:400;color:#222;right:230px;text-align:right;">100,00%</div><div class="t" style="top:798.91px;font-size:14.7px;line-height:18px;font-weight:400;color:#222;right:150.5px;text-align:right;">3 960,00</div><svg class="r" style="left:1769px;top:799px;" width="16" height="16" viewBox="0 0 16 16"><g transform="translate(8 8) rotate(-45) translate(-10.2 0)" fill="#cfcfcf"><path d="M0 0L4.2 -2.8V2.8z"/><rect x="4.8" y="-2.8" width="10.2" height="5.6"/><path d="M15.9 -2.8h2.5a1.8 2.8 0 0 1 0 5.6h-2.5z"/></g><path d="M3.2 12.8l1.2-1.2" stroke="#fff" stroke-width="1" opacity=".7"/></svg><svg class="r" style="left:1806px;top:800px;" width="13" height="15" viewBox="0 0 13 15"><path d="M4.6 0.3h3.8l.6 1.1H12.8v1.9H0.2V1.4H4z" fill="#505050"/><rect x="1.1" y="4.2" width="10.8" height="10.8" rx=".6" fill="#505050"/></svg><div class="t" style="top:832.11px;font-size:14.7px;line-height:18px;font-weight:400;color:#333;left:313.2px;">Ajouter un packbuilder</div><div class="r" style="left:301px;top:900px;width:1560px;height:1px;background:#e2e2e2;"></div><div class="r" style="left:301px;top:901px;width:1560px;height:179px;background:#fbfbfb;"></div><svg class="r" style="left:866px;top:877px;" width="8" height="5" viewBox="0 0 8 5"><path d="M0 5L4 0l4 5z" fill="#888"/></svg><div class="r" style="left:340px;top:958px;width:433px;height:31px;background:#fff;border-radius:3px 3px 0 0;"></div><div class="r" style="left:340px;top:989px;width:433px;height:1px;background:#dedede;"></div><svg class="r" style="left:778px;top:969px;" width="15" height="14" viewBox="0 0 15 14"><defs><radialGradient id="pg" cx=".4" cy=".35" r=".7"><stop offset="0" stop-color="#4a6cc0"/><stop offset="1" stop-color="#14206a"/></radialGradient></defs><circle cx="7.3" cy="7" r="6.8" fill="url(#pg)"/><path d="M7.3 3.2v7.6M3.5 7h7.6" stroke="#fff" stroke-width="2.4"/></svg><svg class="r" style="left:799px;top:973px;" width="10" height="7" viewBox="0 0 10 7"><path d="M1 1l4 4 4-4" stroke="#263c5c" stroke-width="1.5" fill="none"/></svg><div class="r" style="left:313px;top:893px;width:566px;height:75px;background:#fff;border:1px solid #b4b4b4;border-top-color:#cfcfcf;border-radius:0 0 4px 4px;box-shadow:0 1px 2px rgba(0,0,0,.08);"></div><div class="t" style="top:904.51px;font-size:14.7px;line-height:18px;font-weight:400;color:#111;left:325.4px;">REF</div><div class="r" style="left:321px;top:929px;width:552px;height:1px;background:#e0e0e0;"></div><div class="r" style="left:317px;top:935px;width:560px;height:31px;background:#ea5a4b;"></div><div class="t" style="top:940.65px;font-size:14px;line-height:18px;font-weight:400;color:#fff;left:323px;">REF-PACK-001 - Forfait Séminaire Pro</div><svg class="r" style="left:274px;top:924px;" width="34" height="20" viewBox="0 0 34 20"><path d="M0 5h18V0l15.5 10L18 20v-5H0z" fill="#f4000a"/></svg><div class="r" style="left:339px;top:995px;width:478px;height:85px;background:#f8f8f8;border:1px solid #d1d1d1;box-sizing:border-box;border-bottom:none;"></div><div class="r" style="left:340px;top:1070px;width:476px;height:10px;background:#fff;border-top:1px solid #d1d1d1;"></div><svg class="r" style="left:355px;top:1009px;" width="15" height="14" viewBox="0 0 15 14"><path d="M0 0h5L3.3 1.7l2.6 2.6-1.6 1.6-2.6-2.6L0 5z M15 0v5l-1.7-1.7-2.6 2.6-1.6-1.6 2.6-2.6L10 0z M0 14V9l1.7 1.7 2.6-2.6 1.6 1.6-2.6 2.6L5 14z M15 14h-5l1.7-1.7-2.6-2.6 1.6-1.6 2.6 2.6L15 9z" fill="#333"/></svg><div class="r" style="left:378px;top:1007px;width:1px;height:18px;background:#d6d6d6;"></div><div class="r" style="left:458px;top:1007px;width:1px;height:18px;background:#d6d6d6;"></div><div class="r" style="left:535px;top:1007px;width:1px;height:18px;background:#d6d6d6;"></div><div class="r" style="left:652px;top:1007px;width:1px;height:18px;background:#d6d6d6;"></div><div class="r" style="left:719px;top:1007px;width:1px;height:18px;background:#d6d6d6;"></div><div class="t" style="top:1009.34px;font-size:12px;line-height:15px;font-weight:400;color:#444;left:393px;">Format</div><svg class="r" style="left:442px;top:1014px;" width="6" height="4" viewBox="0 0 6 4"><path d="M0 0h6L3 4z" fill="#444"/></svg><div class="t" style="top:1009.34px;font-size:12px;line-height:15px;font-weight:400;color:#444;left:470px;">Taille</div><svg class="r" style="left:519px;top:1014px;" width="6" height="4" viewBox="0 0 6 4"><path d="M0 0h6L3 4z" fill="#444"/></svg><div class="t" style="top:1006.30px;font-size:15px;line-height:19px;font-weight:700;color:#333;left:251.60000000000002px;width:600px;text-align:center;">B</div><div class="t" style="top:1006.30px;font-size:15px;line-height:19px;font-weight:700;color:#333;left:278px;width:600px;text-align:center;font-family:"Liberation Serif",serif;"><i>I</i></div><div class="t" style="top:1006.15px;font-size:14px;line-height:18px;font-weight:700;color:#333;left:307.5px;width:600px;text-align:center;">U</div><div class="r" style="left:602px;top:1021px;width:11px;height:1.5px;background:#333;"></div><div class="t" style="top:1006.30px;font-size:15px;line-height:19px;font-weight:700;color:#333;left:335.29999999999995px;width:600px;text-align:center;">S</div><div class="r" style="left:628px;top:1015px;width:14px;height:1.5px;background:#333;"></div><div class="t" style="top:1005.15px;font-size:14px;line-height:18px;font-weight:700;color:#333;left:367.6px;width:600px;text-align:center;">A</div><div class="r" style="left:660px;top:1021px;width:15px;height:2px;background:#555;"></div><svg class="r" style="left:679px;top:1015px;" width="5" height="3" viewBox="0 0 5 3"><path d="M0 0h5L2.5 3z" fill="#444"/></svg><div class="t" style="top:1005.30px;font-size:15px;line-height:19px;font-weight:700;color:#333;left:401.5px;width:600px;text-align:center;font-family:"Liberation Serif",serif;"><i>T</i></div><svg class="r" style="left:703px;top:1016px;" width="6" height="7" viewBox="0 0 6 7"><path d="M0.5 1l5 5M5.5 1l-5 5" stroke="#333" stroke-width="1.2"/></svg><div class="r" style="left:696px;top:1021px;width:8px;height:1px;background:#333;"></div><div class="r" style="left:462px;top:1040px;width:1px;height:18px;background:#d6d6d6;"></div><div class="r" style="left:579px;top:1040px;width:1px;height:18px;background:#d6d6d6;"></div><div class="r" style="left:640px;top:1040px;width:1px;height:18px;background:#d6d6d6;"></div><svg class="r" style="left:356px;top:1043px;" width="14" height="13" viewBox="0 0 14 13"><path d="M1.2 1.5l1-.8v4.6M0.5 8.6c.3-.5.8-.8 1.4-.8.7 0 1.1.4 1.1 1 0 1.2-2.5 1.8-2.5 3.4h2.6" stroke="#333" stroke-width="1" fill="none"/><path d="M5 2.5h7.5M5 5.5h7.5M5 9.5h7.5M5 12.5h7.5" stroke="#333" stroke-width="1"/></svg><svg class="r" style="left:384px;top:1043px;" width="14" height="13" viewBox="0 0 14 13"><circle cx="1.8" cy="3.8" r="1.7" fill="#333"/><circle cx="1.8" cy="10.8" r="1.7" fill="#333"/><path d="M5 2.5h8M5 5.5h8M5 9.5h8M5 12.5h8" stroke="#333" stroke-width="1"/></svg><svg class="r" style="left:411px;top:1043px;" width="14" height="13" viewBox="0 0 14 13"><path d="M0 6.5h3.5M1.5 5l-1.5 1.5 1.5 1.5" stroke="#bbb" stroke-width="1" fill="none"/><path d="M6 0v13" stroke="#bbb" stroke-width="1.2"/><path d="M8 1h6M8 4h5M8 7h5M8 10h5M8 12.5h6" stroke="#bbb" stroke-width="1.1"/><path d="M4 1v1M4 11v1" stroke="#bbb" stroke-width="1"/></svg><svg class="r" style="left:439px;top:1043px;" width="14" height="13" viewBox="0 0 14 13"><path d="M0 6.5h3.5M2 5l1.5 1.5L2 8" stroke="#333" stroke-width="1" fill="none"/><path d="M6 0v13" stroke="#333" stroke-width="1.2"/><path d="M8 1h6M8 4h5M8 7h5M8 10h5M8 12.5h6" stroke="#333" stroke-width="1.1"/><path d="M4 1v1M4 11v1" stroke="#333" stroke-width="1"/></svg><svg class="r" style="left:473px;top:1043px;" width="14" height="13" viewBox="0 0 14 13"><path d="M0 1.5h12" stroke="#333" stroke-width="1.8"/><path d="M0 5h8" stroke="#333" stroke-width="1.8"/><path d="M0 8.5h12" stroke="#333" stroke-width="1.8"/><path d="M0 12h8" stroke="#333" stroke-width="1.8"/></svg><svg class="r" style="left:501px;top:1043px;" width="14" height="13" viewBox="0 0 14 13"><path d="M0.0 1.5h12" stroke="#333" stroke-width="1.8"/><path d="M2.0 5h8" stroke="#333" stroke-width="1.8"/><path d="M0.0 8.5h12" stroke="#333" stroke-width="1.8"/><path d="M2.0 12h8" stroke="#333" stroke-width="1.8"/></svg><svg class="r" style="left:529px;top:1043px;" width="14" height="13" viewBox="0 0 14 13"><path d="M0 1.5h12" stroke="#333" stroke-width="1.8"/><path d="M4 5h8" stroke="#333" stroke-width="1.8"/><path d="M0 8.5h12" stroke="#333" stroke-width="1.8"/><path d="M4 12h8" stroke="#333" stroke-width="1.8"/></svg><svg class="r" style="left:557px;top:1043px;" width="14" height="13" viewBox="0 0 14 13"><path d="M0 1.5h12" stroke="#333" stroke-width="1.8"/><path d="M0 5h12" stroke="#333" stroke-width="1.8"/><path d="M0 8.5h12" stroke="#333" stroke-width="1.8"/><path d="M0 12h12" stroke="#333" stroke-width="1.8"/></svg><svg class="r" style="left:589px;top:1044px;" width="14" height="8" viewBox="0 0 14 8"><rect x="0.8" y="0.8" width="7" height="6" rx="3" stroke="#333" stroke-width="1.6" fill="none"/><rect x="5.5" y="0.8" width="7.5" height="6" rx="3" stroke="#333" stroke-width="1.6" fill="none"/></svg><svg class="r" style="left:617px;top:1044px;" width="14" height="11" viewBox="0 0 14 11"><rect x="0.8" y="0.8" width="7" height="6" rx="3" stroke="#bbb" stroke-width="1.4" fill="none"/><rect x="5.5" y="0.8" width="7.5" height="6" rx="3" stroke="#bbb" stroke-width="1.4" fill="none"/><path d="M8 6l4 4M12 6l-4 4" stroke="#bbb" stroke-width="1.2"/></svg><svg class="r" style="left:651px;top:1042px;" width="12" height="15" viewBox="0 0 12 15"><path d="M0.7 0.7h6.5l4 4v9.6H0.7z" stroke="#333" stroke-width="1.2" fill="#fff"/><path d="M4.5 6.5L2.8 8.7l1.7 2.2M7 6.5l1.7 2.2L7 10.9" stroke="#333" stroke-width="1" fill="none"/></svg><div class="t" style="top:1041.84px;font-size:12px;line-height:15px;font-weight:400;color:#444;left:668.6px;">Source</div><div class="r" style="left:834px;top:1025px;width:75px;height:28px;background:#fff;border-bottom:1px solid #e3e3e3;border-radius:3px;box-shadow:0 0 1px rgba(0,0,0,.04);box-sizing:border-box;"></div><div class="t" style="top:1030.21px;font-size:14.7px;line-height:18px;font-weight:400;color:#111;right:1016px;text-align:right;">0%</div><svg class="r" style="left:893px;top:1036px;" width="10" height="7" viewBox="0 0 10 7"><path d="M1 1l4 4 4-4" stroke="#111" stroke-width="1.8" fill="none"/></svg><div class="r" style="left:925px;top:1025px;width:59px;height:28px;background:#fff;border-bottom:1px solid #e3e3e3;border-radius:3px;box-shadow:0 0 1px rgba(0,0,0,.04);box-sizing:border-box;"></div><div class="r" style="left:1002px;top:1025px;width:59px;height:28px;background:#fff;border-bottom:1px solid #e3e3e3;border-radius:3px;box-shadow:0 0 1px rgba(0,0,0,.04);box-sizing:border-box;"></div><div class="r" style="left:1077px;top:1025px;width:49px;height:28px;background:#fff;border-bottom:1px solid #e3e3e3;border-radius:3px;box-shadow:0 0 1px rgba(0,0,0,.04);box-sizing:border-box;"></div><div class="t" style="top:1030.21px;font-size:14.7px;line-height:18px;font-weight:400;color:#111;right:777.5px;text-align:right;">1</div><div class="r" style="left:1142px;top:1025px;width:146px;height:28px;background:#fff;border-bottom:1px solid #e3e3e3;border-radius:3px;box-shadow:0 0 1px rgba(0,0,0,.04);box-sizing:border-box;"></div><div class="t" style="top:1030.21px;font-size:14.7px;line-height:18px;font-weight:400;color:#111;left:1148.3px;">tonne</div><svg class="r" style="left:1273px;top:1036px;" width="10" height="7" viewBox="0 0 10 7"><path d="M1 1l4 4 4-4" stroke="#111" stroke-width="1.8" fill="none"/></svg><div class="r" style="left:1314px;top:1026px;width:49px;height:28px;background:#fff;border-bottom:1px solid #e3e3e3;border-radius:3px;box-shadow:0 0 1px rgba(0,0,0,.04);box-sizing:border-box;"></div><div class="t" style="top:1030.21px;font-size:14.7px;line-height:18px;font-weight:400;color:#aaa;left:1363.3px;">%</div><div class="r" style="left:1392px;top:1026px;width:84px;height:28px;background:#fff;border-bottom:1px solid #e3e3e3;border-radius:3px;box-shadow:0 0 1px rgba(0,0,0,.04);box-sizing:border-box;"></div><div class="r" style="left:1511px;top:1026px;width:49px;height:28px;background:#fff;border-bottom:1px solid #e3e3e3;border-radius:3px;box-shadow:0 0 1px rgba(0,0,0,.04);box-sizing:border-box;"></div><div class="t" style="top:1030.21px;font-size:14.7px;line-height:18px;font-weight:400;color:#aaa;left:1560.5px;">%</div><div class="r" style="left:1608px;top:1026px;width:49px;height:28px;background:#fff;border-bottom:1px solid #e3e3e3;border-radius:3px;box-shadow:0 0 1px rgba(0,0,0,.04);box-sizing:border-box;"></div><div class="t" style="top:1030.21px;font-size:14.7px;line-height:18px;font-weight:400;color:#aaa;left:1657px;">%</div><div class="r" style="left:1719px;top:1022px;width:101px;height:35px;background:#9a74a8;border-radius:4px;"></div><div class="t" style="top:1030.21px;font-size:14.7px;line-height:18px;font-weight:700;color:#fff;left:1469.8px;width:600px;text-align:center;">AJOUTER</div>
</body></html>
